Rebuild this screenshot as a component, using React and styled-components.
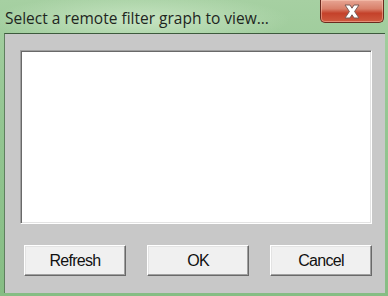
import React from 'react'
import styled, { createGlobalStyle } from 'styled-components'

const GlobalStyle = createGlobalStyle`
  html, body {
    margin: 0;
    padding: 0;
    background: #8fc28d;
  }
`

const Window = styled.div`
  width: 388px;
  height: 296px;
  box-sizing: border-box;
  display: flex;
  flex-direction: column;
  padding: 0 3px 3px 4px;
  background:
    radial-gradient(ellipse 150px 26px at 140px 20px, rgba(210, 235, 205, 0.75), rgba(210, 235, 205, 0) 100%),
    linear-gradient(180deg, #a6d0a2 0%, #94c692 40%, #86bd84 100%);
  font-family: "Liberation Sans", Arial, sans-serif;
`

const TitleBar = styled.div`
  height: 33px;
  display: flex;
  justify-content: space-between;
  align-items: flex-start;
`

const Title = styled.div`
  padding: 7px 0 0 1px;
  font-family: "Open Sans", "Noto Sans", sans-serif;
  font-size: 15.5px;
  letter-spacing: 0;
  color: #1e261e;
`

const CloseButton = styled.div`
  width: 64px;
  height: 23px;
  margin-right: 1px;
  box-sizing: border-box;
  border: 1px solid #6b2a1e;
  border-top: none;
  border-radius: 0 0 5px 5px;
  background: linear-gradient(180deg, #e7a594 0%, #d9806a 40%, #c4412a 60%, #cf5a3f 100%);
  box-shadow: inset 0 0 0 1px rgba(255, 210, 190, 0.45);
  display: flex;
  align-items: center;
  justify-content: center;
`

const Client = styled.div`
  flex: 1;
  background: #c8c8c8;
  border-top: 1px solid #3d5a3d;
  border-left: 1px solid #5f7f5f;
  padding: 16px 12px 0 15px;
  display: flex;
  flex-direction: column;
`

const ListBox = styled.div`
  width: 352px;
  height: 174px;
  box-sizing: border-box;
  background: #ffffff;
  border-top: 1px solid #a0a0a0;
  border-left: 1px solid #a0a0a0;
  border-right: 1px solid #ffffff;
  border-bottom: 1px solid #ffffff;
  box-shadow: inset 1px 1px 0 #696969, inset -1px -1px 0 #e3e3e3;
`

const ButtonRow = styled.div`
  margin: 21px 0 0 4px;
  width: 348px;
  display: flex;
  justify-content: space-between;
`

const Button = styled.div`
  width: 102px;
  height: 31px;
  box-sizing: border-box;
  background: #f0f0f0;
  border-top: 1px solid #ffffff;
  border-left: 1px solid #ffffff;
  border-right: 1px solid #696969;
  border-bottom: 1px solid #696969;
  box-shadow: inset -1px -1px 0 #a0a0a0, inset 1px 1px 0 #e3e3e3;
  display: flex;
  align-items: center;
  justify-content: center;
  font-size: 16px;
  letter-spacing: -0.7px;
  color: #111111;
`

const CloseGlyph = () => (
  <svg width="20" height="15" viewBox="0 0 20 15">
    <path
      d="M3 1 L8 1 L10 4.2 L12 1 L17 1 L12.6 7.5 L17 14 L12 14 L10 10.8 L8 14 L3 14 L7.4 7.5 Z"
      fill="#ffffff"
      stroke="#7a5a55"
      strokeWidth="1"
      strokeLinejoin="round"
    />
  </svg>
)

export default function App() {
  return (
    <>
      <GlobalStyle />
      <Window>
        <TitleBar>
          <Title>Select a remote filter graph to view...</Title>
          <CloseButton>
            <CloseGlyph />
          </CloseButton>
        </TitleBar>
        <Client>
          <ListBox />
          <ButtonRow>
            <Button>Refresh</Button>
            <Button>OK</Button>
            <Button>Cancel</Button>
          </ButtonRow>
        </Client>
      </Window>
    </>
  )
}
